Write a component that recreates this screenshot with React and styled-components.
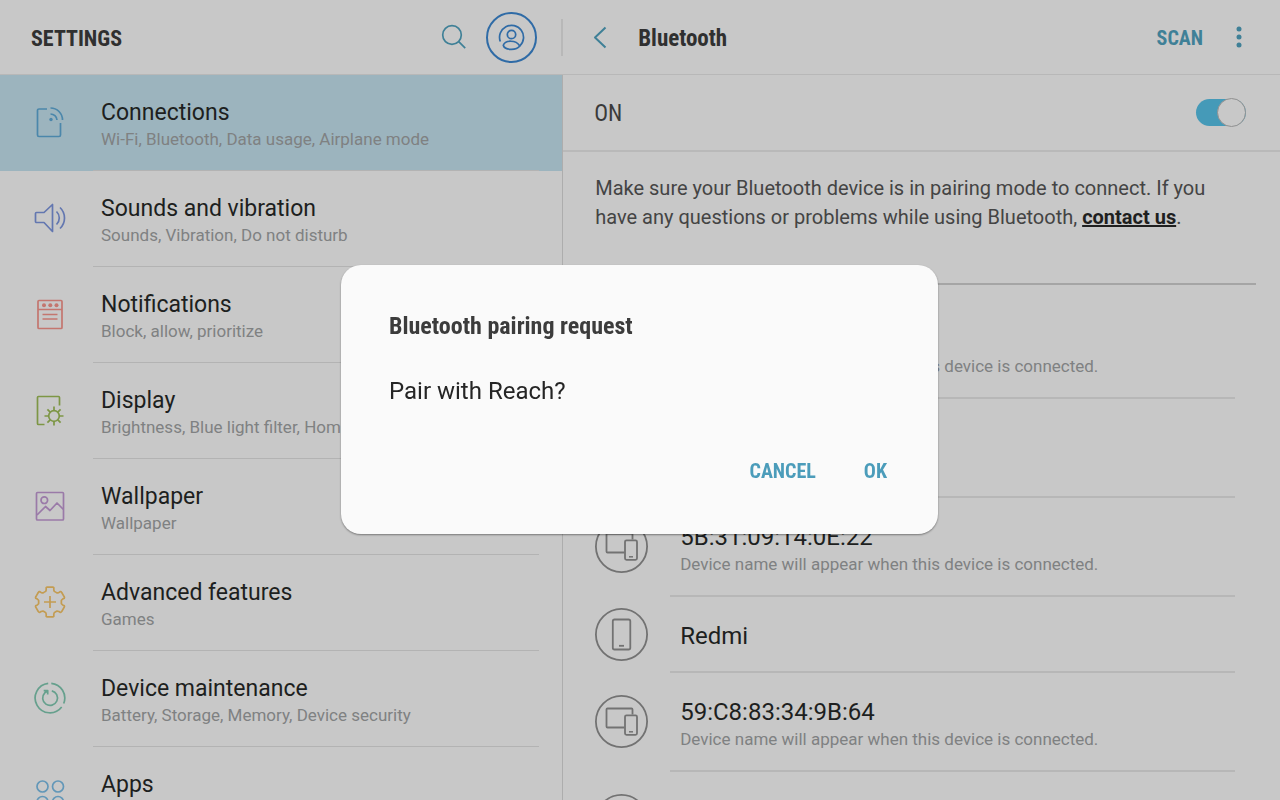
import React from "react";
import styled, { createGlobalStyle } from "styled-components";

const Global = createGlobalStyle`
  *, *::before, *::after { box-sizing: border-box; }
  html, body { margin: 0; height: 100%; overflow: hidden; background: #c8c8c8; }
  body { font-family: Roboto, "Liberation Sans", sans-serif; color: #1f1f1f; }
  h1, h2, p, ul { margin: 0; padding: 0; font-weight: 400; }
  button { margin: 0; padding: 0; border: 0; background: none; }
  svg { display: block; fill: none; flex: none; }
`;

const condensed = `font-family: "Roboto Condensed", Roboto, "Liberation Sans Narrow", sans-serif;`;

const Screen = styled.div`
  display: flex;
  height: 100vh;
  overflow: hidden;
  background: #c8c8c8;
`;

const Sidebar = styled.aside`
  flex: 0 0 44%;
  min-width: 0;
`;

const Detail = styled.main`
  flex: 1;
  min-width: 0;
`;

const Bar = styled.header`
  display: flex;
  align-items: center;
  height: 75px;
  border-bottom: 1px solid #b8b8b8;
  padding-left: ${(p) => p.$left}px;
  padding-right: ${(p) => p.$right}px;
`;

const BarTitle = styled.h1`
  ${condensed}
  flex: 1;
  padding-top: 3px;
  padding-left: ${(p) => p.$indent || 0}px;
  font-size: ${(p) => p.$size}px;
  line-height: 28px;
  font-weight: 700;
  color: #303030;
`;

const IconButton = styled.button`
  display: grid;
  place-items: center;
  width: ${(p) => p.$w}px;
  height: 51px;
  color: #3f8097;
`;

const ProfileButton = styled(IconButton)`
  margin: 0 24px 0 7px;
  border: 2px solid #2f6ba6;
  border-radius: 50%;
  color: #2f6ba6;
`;

const MoreButton = styled(IconButton)`
  margin-left: 19px;
`;

const BarDivider = styled.span`
  width: 2px;
  height: 37px;
  background: #b8b8b8;
`;

const Menu = styled.ul`
  list-style: none;
  min-height: calc(100vh - 75px);
  border-right: 1px solid #adadad;
`;

const MenuItem = styled.li`
  background: ${(p) => (p.$active ? "#9cb4be" : "transparent")};
`;

const MenuLink = styled.a`
  display: flex;
  height: 96px;
  color: inherit;
  text-decoration: none;
`;

const MenuIcon = styled.span`
  display: grid;
  place-items: center;
  width: 93px;
  padding: 0 0 2px 7px;
  color: ${(p) => p.$color};
`;

const MenuText = styled.span`
  flex: 1;
  display: flex;
  flex-direction: column;
  margin-right: 23px;
  padding: 24px 0 0 8px;
  border-bottom: 1px solid #b3b3b3;
  white-space: nowrap;
`;

const Title = styled.span`
  display: block;
  min-height: 30px;
  font-size: 24px;
  line-height: 30px;
  color: #1d1f20;
`;

const MenuTitle = styled(Title)`
  min-height: 28px;
  font-size: 23px;
  line-height: 28px;
`;

const Sub = styled.span`
  display: block;
  font-size: 17px;
  line-height: 24px;
  color: #7f8182;
`;

const ScanButton = styled.button`
  ${condensed}
  padding-top: 2px;
  font-size: 20px;
  line-height: 24px;
  font-weight: 700;
  color: #3f8097;
`;

const SwitchRow = styled.label`
  ${condensed}
  display: flex;
  align-items: center;
  justify-content: space-between;
  height: 77px;
  padding: 0 34px 0 31px;
  border-bottom: 2px solid #b9b9b9;
  font-size: 23px;
  line-height: 28px;
  color: #3a3a3a;
`;

const SwitchText = styled.span`
  padding-top: 2px;
`;

const Switch = styled.input`
  appearance: none;
  position: relative;
  width: 50px;
  height: 27px;
  margin: 0;
  border-radius: 14px;
  background: #459ab8;
  &::before {
    content: "";
    position: absolute;
    top: -1px;
    right: 0;
    width: 29px;
    height: 29px;
    border: 1px solid #909090;
    border-radius: 50%;
    background: #c8c8c8;
  }
`;

const Body = styled.div`
  padding: 22px 24px 0 32px;
`;

const Info = styled.p`
  padding: 0 32px 51px 0;
  border-bottom: 2px solid #a5a5a5;
  font-size: 20px;
  line-height: 29px;
  color: #444;
  a { color: #1f1f1f; font-weight: 700; }
`;

const Devices = styled.ul`
  list-style: none;
  padding: 15px 21px 0 0;
`;

const Device = styled.li`
  display: flex;
  align-items: stretch;
  height: ${(p) => (p.$single ? 76 : 99)}px;
`;

const DeviceIcon = styled.span`
  display: grid;
  place-items: center start;
  width: 75px;
  padding-bottom: 2px;
  color: #727272;
`;

const DeviceText = styled.span`
  flex: 1;
  display: flex;
  flex-direction: column;
  justify-content: center;
  padding: 4px 0 0 10px;
  border-bottom: 2px solid #b7b7b7;
`;

const Layer = styled.div`
  position: fixed;
  inset: 0;
  display: grid;
  place-items: center;
  padding: 0 1px 1px 0;
`;

const Dialog = styled.section`
  width: 597px;
  max-width: 92vw;
  padding: 46px 51px 48px 48px;
  border-radius: 20px;
  background: #fafafa;
  box-shadow: 0 1px 2px rgba(0, 0, 0, 0.4);
`;

const DialogTitle = styled.h2`
  ${condensed}
  font-size: 24px;
  line-height: 30px;
  font-weight: 700;
  color: #3c3c3c;
`;

const DialogText = styled.p`
  margin-top: 34px;
  font-size: 24px;
  line-height: 32px;
  color: #252525;
`;

const Actions = styled.div`
  display: flex;
  justify-content: flex-end;
  gap: 48px;
  margin-top: 49px;
`;

const Action = styled.button`
  ${condensed}
  font-size: 20px;
  line-height: 30px;
  font-weight: 700;
  color: #4b9cba;
`;

const Svg = ({ w = 34, h = 34, sw = 1.7, children }) => (
  <svg width={w} height={h} viewBox={`0 0 ${w} ${h}`} stroke="currentColor" strokeWidth={sw} strokeLinejoin="round" aria-hidden="true">
    {children}
  </svg>
);

const gearPath = (() => {
  let d = "";
  for (let i = 0; i < 6; i++) {
    const at = (r, deg) => {
      const a = ((i * 60 - 90 + deg) * Math.PI) / 180;
      return `${(17 + r * Math.cos(a)).toFixed(2)} ${(17 + r * Math.sin(a)).toFixed(2)}`;
    };
    d += `${i ? "L" : "M"}${at(11.5, -22)} Q${at(12, -19)} ${at(13, -17)} L${at(14.8, -15)} Q${at(15.4, -13)} ${at(15.1, -9)} L${at(15.1, 9)} Q${at(15.4, 13)} ${at(14.8, 15)} L${at(13, 17)} Q${at(12, 19)} ${at(11.5, 22)} Q${at(11.3, 30)} ${at(11.5, 38)} `;
  }
  return d + "Z";
})();

const icons = {
  connections: (
    <Svg>
      <path d="M14 4H6a1.500 1.500 0 0 0-1.500 1.500v24.500a1.500 1.500 0 0 0 1.500 1.500h20a1.500 1.500 0 0 0 1.500-1.500V18" />
      <path d="M17.500 3a12 12 0 0 1 12 12M17.500 9a6.500 6.500 0 0 1 6.500 6" />
      <circle cx="18" cy="14.500" r="1.700" fill="currentColor" stroke="none" />
    </Svg>
  ),
  sound: (
    <Svg>
      <path d="M3.500 11.500h7.500L19.500 3.500v27L11 21.500H3.500a1 1 0 0 1-1-1v-8a1 1 0 0 1 1-1z" />
      <path d="M23.500 10.500a9 9 0 0 1 0 13M27 6.500a14.500 14.500 0 0 1 0 21" />
    </Svg>
  ),
  notifications: (
    <Svg>
      <rect x="5" y="3.500" width="24" height="28" rx="1" />
      <path d="M5 12.500h24M9.500 17.500h15M9.500 22h15" />
      <g fill="currentColor" stroke="none"><circle cx="11" cy="8.300" r="2" /><circle cx="17.300" cy="8.300" r="2" /><circle cx="23.500" cy="8.300" r="2" /></g>
    </Svg>
  ),
  display: (
    <Svg>
      <path d="M11.500 31.500H5.500a1 1 0 0 1-1-1V4.500a1 1 0 0 1 1-1h20a1 1 0 0 1 1 1v8" />
      <circle cx="21" cy="23" r="5.300" />
      <path d="M21 17.500v-4M21 28.500v4M15.500 23h-4M26.500 23h4M17.200 19.200l-2.800-2.800M24.800 26.800l2.800 2.800M17.200 26.800l-2.800 2.800M24.800 19.200l2.800-2.800" />
    </Svg>
  ),
  wallpaper: (
    <Svg>
      <rect x="3.500" y="3.500" width="27" height="27.500" rx="1" />
      <circle cx="11.300" cy="11.200" r="3.300" />
      <path d="M4 26l8.500-8.500 4.500 4 7-7.500 6.500 6.500" />
    </Svg>
  ),
  advanced: (
    <Svg>
      <path d={gearPath} />
      <path d="M17 11v12M11 17h12" />
    </Svg>
  ),
  maintenance: (
    <Svg>
      <path d="M15.200 2.300A14.800 14.800 0 1 0 28.700 26M18.300 2.300A14.800 14.800 0 0 1 30.700 22.500" />
      <path d="M18.800 9.800A7.400 7.400 0 1 1 11.800 11.800L14.600 9.800M10.700 9.600h4v4" />
    </Svg>
  ),
  apps: (
    <Svg>
      <circle cx="9.500" cy="9.500" r="5.500" /><circle cx="25" cy="9.500" r="5.500" />
      <circle cx="9.500" cy="25" r="5.500" /><circle cx="25" cy="25" r="5.500" />
    </Svg>
  ),
};

const menu = [
  ["connections", "Connections", "Wi-Fi, Bluetooth, Data usage, Airplane mode", "#4b87ab"],
  ["sound", "Sounds and vibration", "Sounds, Vibration, Do not disturb", "#6377b0"],
  ["notifications", "Notifications", "Block, allow, prioritize", "#c4766f"],
  ["display", "Display", "Brightness, Blue light filter, Home screen", "#7d9645"],
  ["wallpaper", "Wallpaper", "Wallpaper", "#9a7aa8"],
  ["advanced", "Advanced features", "Games", "#c39c52"],
  ["maintenance", "Device maintenance", "Battery, Storage, Memory, Device security", "#66a08d"],
  ["apps", "Apps", "", "#6297b8"],
];

const pending = "Device name will appear when this device is connected.";

const devices = [
  { sub: pending },
  {},
  { name: "5B:31:09:14:0E:22", sub: pending },
  { name: "Redmi", phone: true },
  { name: "59:C8:83:34:9B:64", sub: pending },
  {},
];

const DeviceGlyph = ({ phone }) => (
  <Svg w={53} h={53} sw={1.8}>
    <circle cx="26.5" cy="26.5" r="25.6" />
    {phone ? (
      <>
        <rect x="17.800" y="11.500" width="17.500" height="30" rx="1.800" />
        <path d="M24 37.800h5" />
      </>
    ) : (
      <>
        <path d="M29.500 32.500H12.500a1 1 0 0 1-1-1v-17a1 1 0 0 1 1-1h24a1 1 0 0 1 1 1V19.500" />
        <rect x="30" y="20.300" width="12" height="19.500" rx="1.500" />
        <path d="M34 36.800h4" strokeWidth="1.500" />
      </>
    )}
  </Svg>
);

export default function App() {
  return (
    <>
      <Global />
      <Screen>
        <Sidebar>
          <Bar $left={31} $right={0}>
            <BarTitle $size={22}>SETTINGS</BarTitle>
            <IconButton $w={50} aria-label="Search">
              <Svg w={26} h={26}>
                <circle cx="11" cy="11" r="9.300" />
                <path d="M17.700 17.700l6.500 6.500" />
              </Svg>
            </IconButton>
            <ProfileButton $w={51} aria-label="Account">
              <Svg w={27} h={27}>
                <path d="M2.300 17.500A12 12 0 1 1 21.800 22" />
                <circle cx="13.500" cy="10.500" r="4.200" />
                <path d="M5.300 21.300C7 16 18 15.500 21.800 22C18.500 26.500 6.500 26.500 5.300 21.300z" />
              </Svg>
            </ProfileButton>
            <BarDivider />
          </Bar>
          <Menu>
            {menu.map(([id, title, sub, color], i) => (
              <MenuItem key={id} $active={i === 0}>
                <MenuLink href={`#${id}`}>
                  <MenuIcon $color={color}>{icons[id]}</MenuIcon>
                  <MenuText>
                    <MenuTitle>{title}</MenuTitle>
                    <Sub>{sub}</Sub>
                  </MenuText>
                </MenuLink>
              </MenuItem>
            ))}
          </Menu>
        </Sidebar>
        <Detail>
          <Bar $left={20} $right={24}>
            <IconButton $w={34} aria-label="Back">
              <Svg w={14} h={24} sw={2}>
                <path d="M12.500 2.500L2 12.500l10.500 10" />
              </Svg>
            </IconButton>
            <BarTitle as="h2" $size={23} $indent={21}>Bluetooth</BarTitle>
            <ScanButton>SCAN</ScanButton>
            <MoreButton $w={34} aria-label="More options">
              <Svg w={6} h={24}>
                <g fill="currentColor" stroke="none">
                  <circle cx="3" cy="4" r="2.500" />
                  <circle cx="3" cy="12" r="2.500" />
                  <circle cx="3" cy="20" r="2.500" />
                </g>
              </Svg>
            </MoreButton>
          </Bar>
          <SwitchRow>
            <SwitchText>ON</SwitchText>
            <Switch type="checkbox" role="switch" defaultChecked />
          </SwitchRow>
          <Body>
            <Info>
              Make sure your Bluetooth device is in pairing mode to connect. If you have any questions or problems while using Bluetooth, <a href="#contact">contact us</a>.
            </Info>
            <Devices>
              {devices.map((d, i) => (
                <Device key={i} $single={d.phone}>
                  <DeviceIcon><DeviceGlyph phone={d.phone} /></DeviceIcon>
                  <DeviceText>
                    <Title>{d.name}</Title>
                    {d.sub && <Sub>{d.sub}</Sub>}
                  </DeviceText>
                </Device>
              ))}
            </Devices>
          </Body>
        </Detail>
      </Screen>
      <Layer>
        <Dialog role="dialog" aria-modal="true" aria-labelledby="pair-title">
          <DialogTitle id="pair-title">Bluetooth pairing request</DialogTitle>
          <DialogText>Pair with Reach?</DialogText>
          <Actions>
            <Action>CANCEL</Action>
            <Action>OK</Action>
          </Actions>
        </Dialog>
      </Layer>
    </>
  );
}
